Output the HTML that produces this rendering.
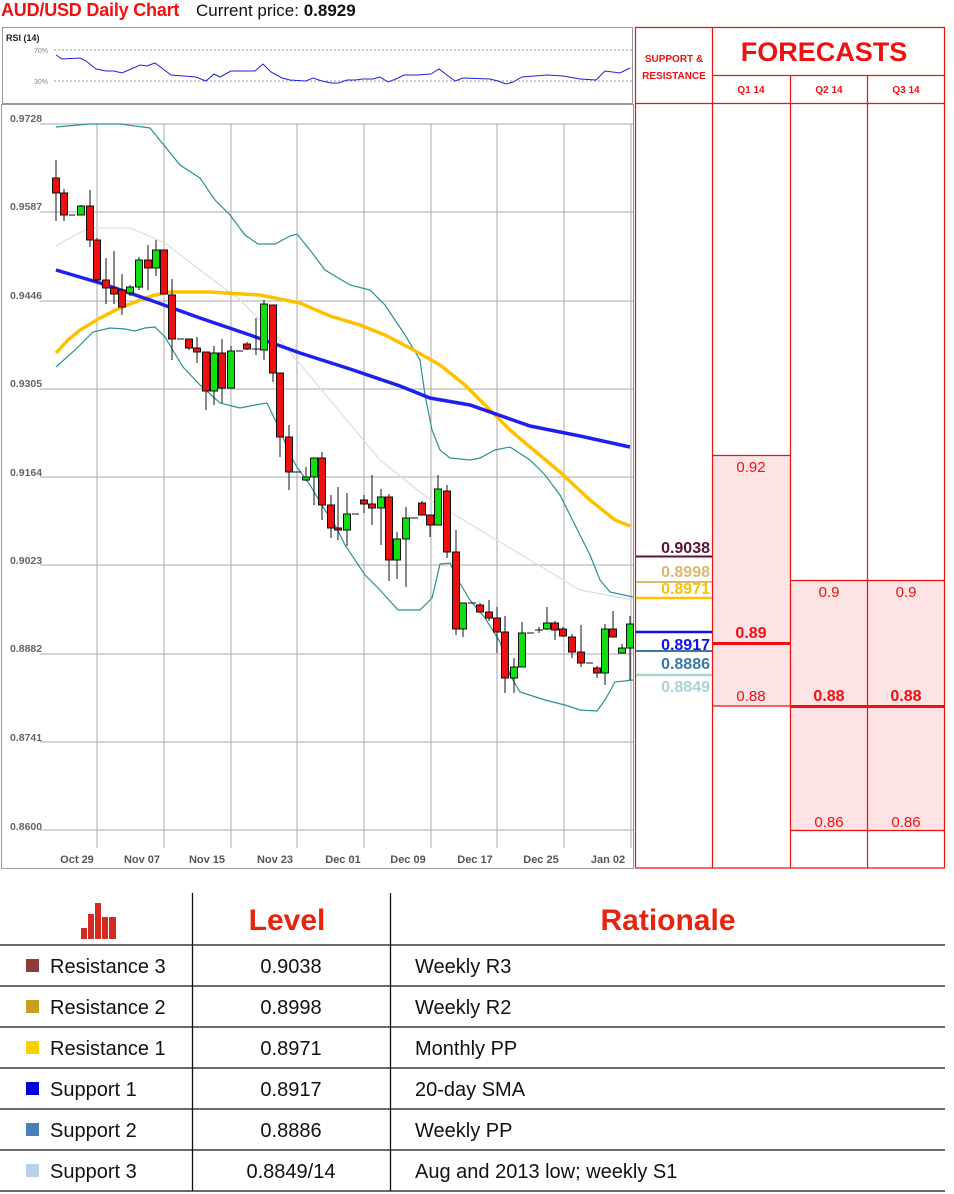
<!DOCTYPE html>
<html><head><meta charset="utf-8"><style>
html,body{margin:0;padding:0;background:#fff;}
body{width:954px;height:1194px;position:relative;overflow:hidden;font-family:"Liberation Sans",sans-serif;}
.t{position:absolute;white-space:nowrap;}
</style></head><body>
<div class="t" style="left:1px;top:0px;font-size:18px;font-weight:bold;color:#f01010;letter-spacing:-0.2px;">AUD/USD Daily Chart</div>
<div class="t" style="left:196px;top:1px;font-size:17px;color:#111;">Current price: <b>0.8929</b></div>

<svg width="954" height="1194" style="position:absolute;left:0;top:0" xmlns="http://www.w3.org/2000/svg" font-family="Liberation Sans, sans-serif">
<rect x="2.5" y="27.5" width="630" height="76" fill="none" stroke="#999" stroke-width="1"/>
<text x="6" y="41" font-size="9" font-weight="bold" fill="#222">RSI (14)</text>
<text x="34" y="53" font-size="7" fill="#888">70%</text>
<text x="34" y="84" font-size="7" fill="#888">30%</text>
<line x1="54" y1="50" x2="632" y2="50" stroke="#777" stroke-dasharray="2,2" stroke-width="0.8"/>
<line x1="54" y1="81" x2="632" y2="81" stroke="#777" stroke-dasharray="2,2" stroke-width="0.8"/>
<polyline fill="none" stroke="#2020e0" stroke-width="1" points="56,55 62,59 80,58 86,61 96,69 106,71 114,71 122,73 140,65 147,66 155,63 163,69 171,75 196,77 206,81 214,74 220,77 231,71 255,71 263,64 271,72 282,78 290,80 306,81 313,78 322,81 331,83 339,83 347,80 355,80 363,79 373,79 380,77 388,82 396,79 404,75 416,75 431,74 439,69 455,81 463,78 490,79 498,81 506,84 513,82 522,77 547,75 563,76 580,79 596,80 605,71 620,73 630,68"/>

<rect x="1.5" y="104.5" width="632" height="764" fill="none" stroke="#999" stroke-width="1"/>
<g stroke="#aaa" stroke-width="1">
<line x1="40" y1="124" x2="633" y2="124"/>
<line x1="40" y1="212" x2="633" y2="212"/>
<line x1="40" y1="301" x2="633" y2="301"/>
<line x1="40" y1="389" x2="633" y2="389"/>
<line x1="40" y1="477" x2="633" y2="477"/>
<line x1="40" y1="565" x2="633" y2="565"/>
<line x1="40" y1="654" x2="633" y2="654"/>
<line x1="40" y1="742" x2="633" y2="742"/>
<line x1="40" y1="830" x2="633" y2="830"/>
<line x1="97" y1="124" x2="97" y2="848"/>
<line x1="164" y1="124" x2="164" y2="848"/>
<line x1="231" y1="124" x2="231" y2="848"/>
<line x1="297" y1="124" x2="297" y2="848"/>
<line x1="364" y1="124" x2="364" y2="848"/>
<line x1="431" y1="124" x2="431" y2="848"/>
<line x1="497" y1="124" x2="497" y2="848"/>
<line x1="564" y1="124" x2="564" y2="848"/>
<line x1="631" y1="124" x2="631" y2="848"/>
</g>
<g font-size="10.5" font-weight="bold" fill="#666">
<text x="10" y="122">0.9728</text><text x="10" y="210">0.9587</text><text x="10" y="299">0.9446</text>
<text x="10" y="387">0.9305</text><text x="10" y="476">0.9164</text><text x="10" y="564">0.9023</text>
<text x="10" y="652">0.8882</text><text x="10" y="741">0.8741</text><text x="10" y="830">0.8600</text>
</g>
<g font-size="11" font-weight="bold" fill="#555" text-anchor="middle">
<text x="77" y="863">Oct 29</text><text x="142" y="863">Nov 07</text><text x="207" y="863">Nov 15</text>
<text x="275" y="863">Nov 23</text><text x="343" y="863">Dec 01</text><text x="408" y="863">Dec 09</text>
<text x="475" y="863">Dec 17</text><text x="541" y="863">Dec 25</text><text x="608" y="863">Jan 02</text>
</g>
<polyline fill="none" stroke="#2a9090" stroke-width="1.2" points="56,127 90,124 120,124 150,128 180,165 200,178 215,200 230,215 245,235 258,244 275,244 290,236 297,234 310,250 325,270 350,285 370,290 385,305 405,335 420,360 425,395 432,430 440,450 450,458 470,460 480,458 495,450 510,447 530,460 545,475 560,495 575,525 590,555 600,580 610,592 633,597"/>
<polyline fill="none" stroke="#2a9090" stroke-width="1.2" points="56,367 75,350 93,332 110,328 125,329 135,331 145,328 155,327 165,337 183,367 200,385 220,403 240,408 255,405 267,403 280,430 290,455 297,467 310,485 323,507 335,525 345,545 365,575 380,590 398,610 420,610 432,598 440,564 450,563 458,580 470,600 485,618 500,642 510,675 520,692 545,700 565,705 580,710 597,711 605,700 615,682 633,680"/>
<polyline fill="none" stroke="#ddd" stroke-width="1.2" points="56,246 75,235 90,228 130,228 165,243 200,270 240,300 280,340 330,400 380,460 430,500 480,530 530,560 580,590 633,600"/>
<polyline fill="none" stroke="#ffc000" stroke-width="3.5" points="56,353 68,340 80,330 100,318 120,308 140,300 155,295 170,292 210,292 260,295 300,303 330,316 360,325 385,335 410,348 440,365 465,385 490,410 510,430 530,447 560,472 590,500 615,520 630,526"/>
<polyline fill="none" stroke="#2020ee" stroke-width="3.5" points="56,270 100,283 150,300 200,318 250,335 300,353 350,369 400,386 430,398 470,405 530,426 580,436 630,447"/>

<g stroke="#111" stroke-width="1">
<line x1="56" y1="160" x2="56" y2="221"/><rect x="52.5" y="178" width="7" height="15" fill="#ee1010"/>
<line x1="64" y1="189" x2="64" y2="221"/><rect x="60.5" y="193" width="7" height="22" fill="#ee1010"/>
<line x1="69" y1="215" x2="75" y2="215"/>
<line x1="81" y1="205" x2="81" y2="215"/><rect x="77.5" y="206" width="7" height="9" fill="#11dd11"/>
<line x1="90" y1="190" x2="90" y2="247"/><rect x="86.5" y="206" width="7" height="34" fill="#ee1010"/>
<line x1="97" y1="238" x2="97" y2="282"/><rect x="93.5" y="240" width="7" height="40" fill="#ee1010"/>
<line x1="106" y1="258" x2="106" y2="304"/><rect x="102.5" y="280" width="7" height="8" fill="#ee1010"/>
<line x1="114" y1="251" x2="114" y2="304"/><rect x="110.5" y="288" width="7" height="6" fill="#ee1010"/>
<line x1="122" y1="274" x2="122" y2="315"/><rect x="118.5" y="290" width="7" height="17" fill="#ee1010"/>
<line x1="130" y1="285" x2="130" y2="296"/><rect x="126.5" y="287" width="7" height="6" fill="#11dd11"/>
<line x1="139" y1="257" x2="139" y2="290"/><rect x="135.5" y="260" width="7" height="27" fill="#11dd11"/>
<line x1="148" y1="245" x2="148" y2="290"/><rect x="144.5" y="260" width="7" height="8" fill="#ee1010"/>
<line x1="156" y1="240" x2="156" y2="276"/><rect x="152.5" y="250" width="7" height="18" fill="#11dd11"/>
<line x1="164" y1="250" x2="164" y2="294"/><rect x="160.5" y="250" width="7" height="44" fill="#ee1010"/>
<line x1="172" y1="279" x2="172" y2="360"/><rect x="168.5" y="295" width="7" height="44" fill="#ee1010"/>
<line x1="177" y1="339" x2="184" y2="339"/>
<line x1="189" y1="339" x2="189" y2="350"/><rect x="185.5" y="339" width="7" height="9" fill="#ee1010"/>
<line x1="197" y1="337" x2="197" y2="363"/><rect x="193.5" y="348" width="7" height="4" fill="#ee1010"/>
<line x1="206" y1="352" x2="206" y2="410"/><rect x="202.5" y="352" width="7" height="39" fill="#ee1010"/>
<line x1="214" y1="346" x2="214" y2="405"/><rect x="210.5" y="353" width="7" height="38" fill="#11dd11"/>
<line x1="222" y1="339" x2="222" y2="403"/><rect x="218.5" y="353" width="7" height="35" fill="#ee1010"/>
<line x1="231" y1="346" x2="231" y2="388"/><rect x="227.5" y="351" width="7" height="37" fill="#11dd11"/>
<line x1="236" y1="351" x2="243" y2="351"/>
<line x1="247" y1="342" x2="247" y2="350"/><rect x="243.5" y="344" width="7" height="5" fill="#ee1010"/>
<line x1="256" y1="318" x2="256" y2="355"/><line x1="252" y1="349" x2="260" y2="349"/>
<line x1="264" y1="300" x2="264" y2="360"/><rect x="260.5" y="304" width="7" height="46" fill="#11dd11"/>
<line x1="273" y1="305" x2="273" y2="382"/><rect x="269.5" y="305" width="7" height="68" fill="#ee1010"/>
<line x1="280" y1="373" x2="280" y2="457"/><rect x="276.5" y="373" width="7" height="64" fill="#ee1010"/>
<line x1="289" y1="425" x2="289" y2="490"/><rect x="285.5" y="437" width="7" height="35" fill="#ee1010"/>
<line x1="293" y1="472" x2="301" y2="472"/>
<line x1="306" y1="467" x2="306" y2="481"/><rect x="302.5" y="477" width="7" height="3" fill="#11dd11"/>
<line x1="314" y1="458" x2="314" y2="505"/><rect x="310.5" y="458" width="7" height="19" fill="#11dd11"/>
<line x1="322" y1="452" x2="322" y2="520"/><rect x="318.5" y="458" width="7" height="47" fill="#ee1010"/>
<line x1="331" y1="495" x2="331" y2="538"/><rect x="327.5" y="505" width="7" height="23" fill="#ee1010"/>
<line x1="338" y1="487" x2="338" y2="540"/><rect x="334.5" y="528" width="7" height="2" fill="#ee1010"/>
<line x1="347" y1="493" x2="347" y2="546"/><rect x="343.5" y="514" width="7" height="16" fill="#11dd11"/>
<line x1="352" y1="514" x2="359" y2="514"/>
<line x1="364" y1="495" x2="364" y2="513"/><rect x="360.5" y="500" width="7" height="4" fill="#ee1010"/>
<line x1="372" y1="475" x2="372" y2="525"/><rect x="368.5" y="504" width="7" height="4" fill="#ee1010"/>
<line x1="381" y1="489" x2="381" y2="545"/><rect x="377.5" y="497" width="7" height="11" fill="#11dd11"/>
<line x1="389" y1="494" x2="389" y2="581"/><rect x="385.5" y="497" width="7" height="63" fill="#ee1010"/>
<line x1="397" y1="532" x2="397" y2="579"/><rect x="393.5" y="539" width="7" height="21" fill="#11dd11"/>
<line x1="406" y1="507" x2="406" y2="587"/><rect x="402.5" y="518" width="7" height="21" fill="#11dd11"/>
<line x1="410" y1="518" x2="418" y2="518"/>
<line x1="422" y1="501" x2="422" y2="515"/><rect x="418.5" y="503" width="7" height="12" fill="#ee1010"/>
<line x1="430" y1="515" x2="430" y2="537"/><rect x="426.5" y="515" width="7" height="10" fill="#ee1010"/>
<line x1="438" y1="475" x2="438" y2="525"/><rect x="434.5" y="489" width="7" height="36" fill="#11dd11"/>
<line x1="447" y1="485" x2="447" y2="558"/><rect x="443.5" y="491" width="7" height="61" fill="#ee1010"/>
<line x1="456" y1="530" x2="456" y2="635"/><rect x="452.5" y="552" width="7" height="77" fill="#ee1010"/>
<line x1="463" y1="603" x2="463" y2="637"/><rect x="459.5" y="603" width="7" height="26" fill="#11dd11"/>
<line x1="468" y1="603" x2="476" y2="603"/>
<line x1="480" y1="603" x2="480" y2="613"/><rect x="476.5" y="605" width="7" height="7" fill="#ee1010"/>
<line x1="489" y1="600" x2="489" y2="621"/><rect x="485.5" y="612" width="7" height="6" fill="#ee1010"/>
<line x1="497" y1="607" x2="497" y2="653"/><rect x="493.5" y="618" width="7" height="14" fill="#ee1010"/>
<line x1="505" y1="616" x2="505" y2="693"/><rect x="501.5" y="632" width="7" height="46" fill="#ee1010"/>
<line x1="514" y1="658" x2="514" y2="693"/><rect x="510.5" y="667" width="7" height="11" fill="#11dd11"/>
<line x1="522" y1="622" x2="522" y2="667"/><rect x="518.5" y="633" width="7" height="34" fill="#11dd11"/>
<line x1="527" y1="633" x2="534" y2="633"/>
<line x1="539" y1="627" x2="539" y2="633"/><line x1="535" y1="630" x2="543" y2="630"/>
<line x1="547" y1="607" x2="547" y2="630"/><rect x="543.5" y="623" width="7" height="6" fill="#11dd11"/>
<line x1="555" y1="621" x2="555" y2="640"/><rect x="551.5" y="623" width="7" height="7" fill="#ee1010"/>
<line x1="563" y1="627" x2="563" y2="637"/><rect x="559.5" y="629" width="7" height="7" fill="#ee1010"/>
<line x1="572" y1="634" x2="572" y2="658"/><rect x="568.5" y="637" width="7" height="15" fill="#ee1010"/>
<line x1="581" y1="625" x2="581" y2="667"/><rect x="577.5" y="652" width="7" height="11" fill="#ee1010"/>
<line x1="586" y1="663" x2="593" y2="663"/>
<line x1="597" y1="666" x2="597" y2="678"/><rect x="593.5" y="668" width="7" height="5" fill="#ee1010"/>
<line x1="605" y1="624" x2="605" y2="685"/><rect x="601.5" y="629" width="7" height="44" fill="#11dd11"/>
<line x1="613" y1="611" x2="613" y2="637"/><rect x="609.5" y="629" width="7" height="8" fill="#ee1010"/>
<line x1="622" y1="644" x2="622" y2="653"/><rect x="618.5" y="648" width="7" height="5" fill="#11dd11"/>
<line x1="630" y1="616" x2="630" y2="680"/><rect x="626.5" y="624" width="7" height="24" fill="#11dd11"/>
</g>

<rect x="712" y="455" width="78" height="251" fill="#fde3e3"/>
<rect x="790" y="580" width="155" height="250" fill="#fde3e3"/>
<g stroke="#ee1111" stroke-width="1.2" fill="none">
<line x1="635.5" y1="27" x2="635.5" y2="868"/>
<line x1="635" y1="27.5" x2="945" y2="27.5"/>
<line x1="712.5" y1="27" x2="712.5" y2="868"/>
<line x1="944.5" y1="27" x2="944.5" y2="868"/>
<line x1="712" y1="75.5" x2="945" y2="75.5"/>
<line x1="635" y1="103.5" x2="945" y2="103.5"/>
<line x1="790.5" y1="75" x2="790.5" y2="868"/>
<line x1="867.5" y1="75" x2="867.5" y2="868"/>
<line x1="635" y1="868" x2="945" y2="868"/>
<line x1="712" y1="455.5" x2="790" y2="455.5"/>
<line x1="790" y1="580.5" x2="945" y2="580.5"/>
<line x1="712" y1="706" x2="790" y2="706"/>
<line x1="790" y1="830.5" x2="945" y2="830.5"/>
</g>
<line x1="712" y1="643.5" x2="790" y2="643.5" stroke="#ee1111" stroke-width="3"/>
<line x1="790" y1="706.5" x2="945" y2="706.5" stroke="#ee1111" stroke-width="3"/>
<text x="674" y="62" font-size="10" font-weight="bold" fill="#ee1111" text-anchor="middle">SUPPORT &amp;</text>
<text x="674" y="79" font-size="10" font-weight="bold" fill="#ee1111" text-anchor="middle">RESISTANCE</text>
<text x="824" y="61" font-size="27" font-weight="bold" fill="#ee1111" text-anchor="middle">FORECASTS</text>
<g font-size="10" font-weight="bold" fill="#ee1111" text-anchor="middle">
<text x="751" y="93">Q1 14</text><text x="829" y="93">Q2 14</text><text x="906" y="93">Q3 14</text>
</g>
<g font-size="15" fill="#ee1111" text-anchor="middle">
<text x="751" y="472">0.92</text>
<text x="751" y="701">0.88</text>
<text x="829" y="597">0.9</text><text x="906" y="597">0.9</text>
<text x="829" y="827">0.86</text><text x="906" y="827">0.86</text>
</g>
<g font-size="16" font-weight="bold" fill="#ee1111" text-anchor="middle">
<text x="751" y="638">0.89</text>
<text x="829" y="701">0.88</text><text x="906" y="701">0.88</text>
</g>
<g font-size="16" font-weight="bold" text-anchor="end">
<text x="710" y="553" fill="#5a1338">0.9038</text>
<text x="710" y="577" fill="#ddb870">0.8998</text>
<text x="710" y="594" fill="#ffc000">0.8971</text>
<text x="710" y="650" fill="#1010ee">0.8917</text>
<text x="710" y="669" fill="#3a78a8">0.8886</text>
<text x="710" y="692" fill="#a8d4d4">0.8849</text>
</g>
<line x1="636" y1="556.5" x2="712" y2="556.5" stroke="#5a1338" stroke-width="2"/>
<line x1="636" y1="582" x2="712" y2="582" stroke="#ddb870" stroke-width="2"/>
<line x1="636" y1="598" x2="712" y2="598" stroke="#ffc000" stroke-width="2.5"/>
<line x1="636" y1="632" x2="712" y2="632" stroke="#1010ee" stroke-width="2.5"/>
<line x1="636" y1="651" x2="712" y2="651" stroke="#3a78a8" stroke-width="2"/>
<line x1="636" y1="675" x2="712" y2="675" stroke="#a8d4d4" stroke-width="2.5"/>

<g stroke="#111" stroke-width="1.3">
<line x1="192.5" y1="893" x2="192.5" y2="1191"/>
<line x1="390.5" y1="893" x2="390.5" y2="1191"/>
<line x1="0" y1="945" x2="945" y2="945"/>
<line x1="0" y1="986" x2="945" y2="986"/>
<line x1="0" y1="1027" x2="945" y2="1027"/>
<line x1="0" y1="1068" x2="945" y2="1068"/>
<line x1="0" y1="1109" x2="945" y2="1109"/>
<line x1="0" y1="1150" x2="945" y2="1150"/>
<line x1="0" y1="1191" x2="945" y2="1191"/>
</g>
<g fill="#d42a20">
<rect x="81" y="928" width="6" height="11"/><rect x="88" y="914" width="6" height="25"/>
<rect x="95" y="903" width="6" height="36"/><rect x="102" y="917" width="6" height="22"/>
<rect x="109" y="917" width="7" height="22"/>
</g>
<text x="287" y="930" font-size="30" font-weight="bold" fill="#e52510" text-anchor="middle">Level</text>
<text x="668" y="930" font-size="30" font-weight="bold" fill="#e52510" text-anchor="middle">Rationale</text>
<rect x="26" y="959" width="13" height="13" fill="#8e3b3b"/>
<rect x="26" y="1000" width="13" height="13" fill="#c8a020"/>
<rect x="26" y="1041" width="13" height="13" fill="#ffd000"/>
<rect x="26" y="1082" width="13" height="13" fill="#0000d8"/>
<rect x="26" y="1123" width="13" height="13" fill="#4a80b8"/>
<rect x="26" y="1164" width="13" height="13" fill="#b8d0e8"/>
<g font-size="20" fill="#111">
<text x="50" y="973">Resistance 3</text><text x="50" y="1014">Resistance 2</text>
<text x="50" y="1055">Resistance 1</text><text x="50" y="1096">Support 1</text>
<text x="50" y="1137">Support 2</text><text x="50" y="1178">Support 3</text>
<text x="415" y="973">Weekly R3</text><text x="415" y="1014">Weekly R2</text>
<text x="415" y="1055">Monthly PP</text><text x="415" y="1096">20-day SMA</text>
<text x="415" y="1137">Weekly PP</text><text x="415" y="1178">Aug and 2013 low; weekly S1</text>
</g>
<g font-size="20" fill="#111" text-anchor="middle">
<text x="291" y="973">0.9038</text><text x="291" y="1014">0.8998</text>
<text x="291" y="1055">0.8971</text><text x="291" y="1096">0.8917</text>
<text x="291" y="1137">0.8886</text><text x="291" y="1178">0.8849/14</text>
</g>
</svg>
</body></html>
